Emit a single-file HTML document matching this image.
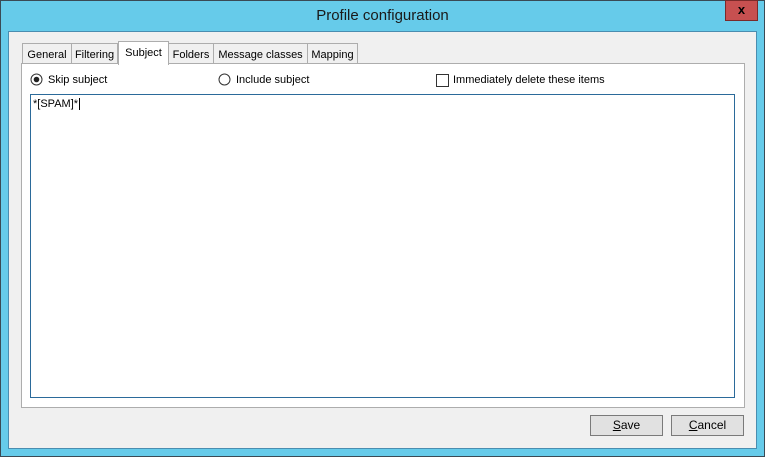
<!DOCTYPE html><html><head><style>
body{margin:0;width:765px;height:457px;background:#66cbea;position:relative;overflow:hidden;font-family:"Liberation Sans",sans-serif;font-size:11px;color:#000}
.a{position:absolute}
.win{left:0;top:0;width:763px;height:455px;border:1px solid #3a4a55;background:#66cbea}
.client{left:8px;top:31px;width:749px;height:418px;background:#f0f0f0;border:1px solid #4a8db0;box-sizing:border-box}
.title{left:0;width:765px;top:7px;text-align:center;font-size:15px;color:#1a1a1a}
.close{left:725px;top:0;width:33px;height:21px;background:#c75050;border:1px solid #7a2a2a;box-sizing:border-box;color:#000;font-weight:bold;text-align:center;line-height:18px;font-size:13px}
.tab{top:43px;height:20px;border:1px solid #adadad;border-bottom:none;background:#f0f0f0;box-sizing:border-box;text-align:center;line-height:22px}
.panel{left:21px;top:63px;width:724px;height:345px;background:#fff;border:1px solid #adadad;box-sizing:border-box}
.btn{top:415px;width:73px;height:21px;background:#e1e1e1;border:1px solid #7a7a7a;box-sizing:border-box;text-align:center;line-height:19px;font-size:12px}
</style></head><body>
<div class="a win"></div>
<div class="a title">Profile configuration</div>
<div class="a close">x</div>
<div class="a client"></div>
<div class="a panel"></div>
<div class="a tab" style="left:22px;width:50px">General</div>
<div class="a tab" style="left:71px;width:47px">Filtering</div>
<div class="a tab" style="left:168px;width:46px">Folders</div>
<div class="a tab" style="left:213px;width:95px">Message classes</div>
<div class="a tab" style="left:307px;width:51px">Mapping</div>
<div class="a tab" style="left:118px;top:41px;height:24px;width:51px;background:#fff;line-height:22px">Subject</div>
<svg class="a" style="left:30px;top:73px" width="14" height="14"><circle cx="6.5" cy="6.5" r="5.5" fill="#fff" stroke="#333"/><circle cx="6.5" cy="6.5" r="2.8" fill="#222"/></svg>
<div class="a" style="left:48px;top:74px">Skip subject</div>
<svg class="a" style="left:218px;top:73px" width="14" height="14"><circle cx="6.5" cy="6.5" r="5.5" fill="#fff" stroke="#333"/></svg>
<div class="a" style="left:236px;top:74px">Include subject</div>
<div class="a" style="left:436px;top:74px;width:13px;height:13px;border:1px solid #333;box-sizing:border-box;background:#fff"></div>
<div class="a" style="left:453px;top:74px">Immediately delete these items</div>
<div class="a" style="left:30px;top:94px;width:705px;height:304px;border:1px solid #2b6a9a;box-sizing:border-box;background:#fff"></div>
<div class="a" style="left:33px;top:98px">*[SPAM]*<span style="border-left:1px solid #000;margin-left:1px"></span></div>
<div class="a btn" style="left:590px"><u>S</u>ave</div>
<div class="a btn" style="left:671px"><u>C</u>ancel</div>
</body></html>
